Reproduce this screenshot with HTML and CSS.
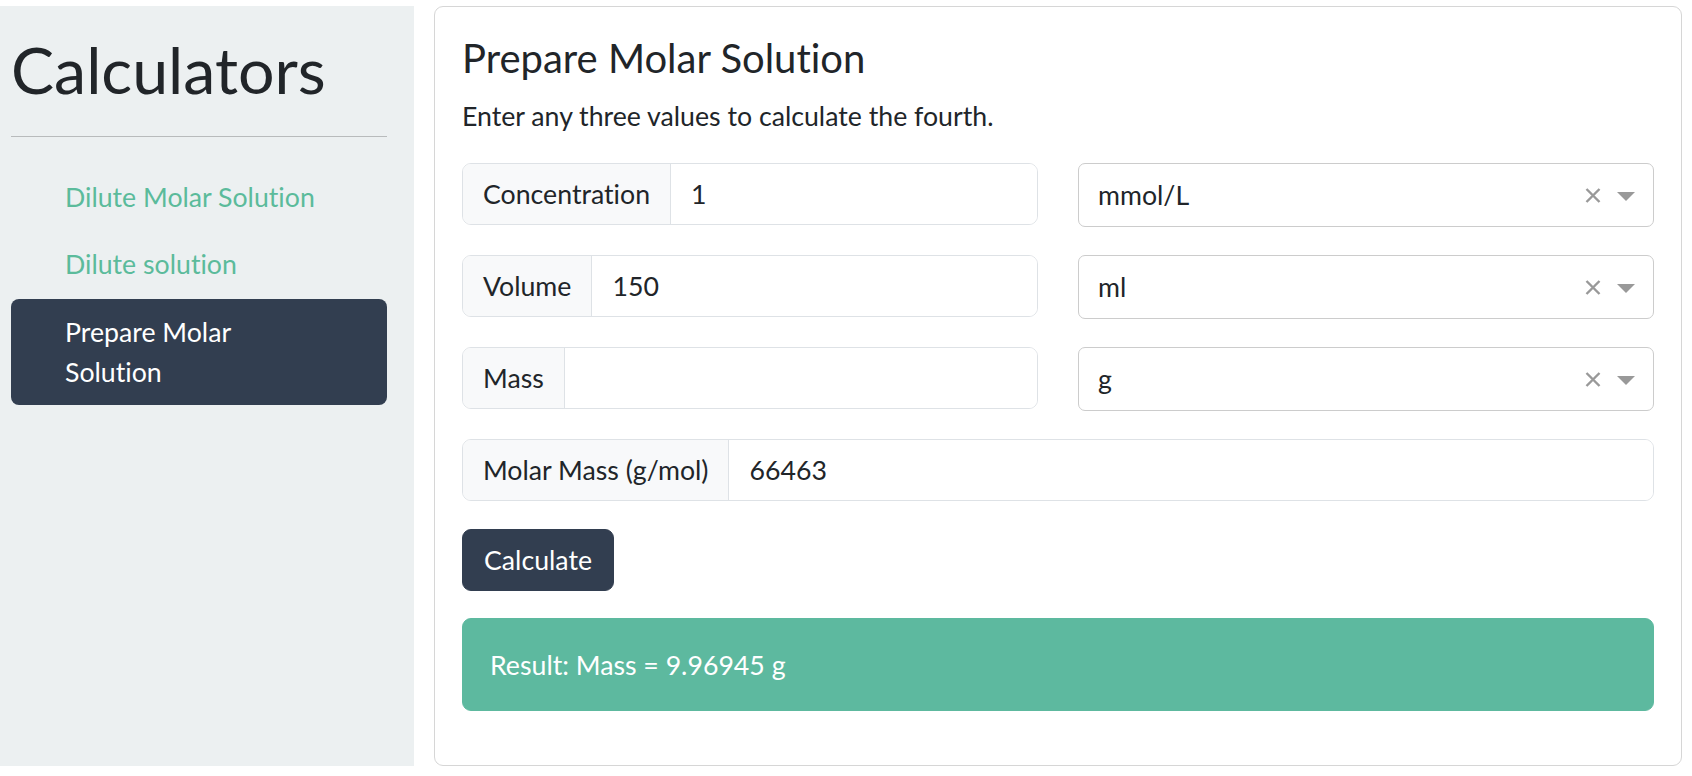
FILE: index.html
```html
<!DOCTYPE html>
<html lang="en">
<head>
<meta charset="utf-8">
<title>Calculators</title>
<link rel="stylesheet" href="styles.css">
</head>
<body>
<div class="page">
  <aside class="sidebar">
    <h1 class="brand">Calculators</h1>
    <hr class="divider">
    <nav class="nav">
      <a class="nav-link" href="#">Dilute Molar Solution</a>
      <a class="nav-link" href="#">Dilute solution</a>
      <a class="nav-link active" href="#">Prepare Molar Solution</a>
    </nav>
  </aside>
  <main class="card">
    <h2 class="card-title">Prepare Molar Solution</h2>
    <p class="card-text">Enter any three values to calculate the fourth.</p>
    <div class="form-grid">
      <div class="input-group"><span class="addon">Concentration</span><input class="field" type="text" value="1"></div>
      <div class="select">
        <span class="select-value">mmol/L</span>
        <svg class="clear-icon" width="16" height="15" viewBox="0 0 16 15"><path d="M1.5 1L14.5 14M14.5 1L1.5 14" stroke="#999" stroke-width="2.4" fill="none"/></svg>
        <svg class="arrow-icon" width="18" height="9" viewBox="0 0 18 9"><path d="M0 0H18L9 9Z" fill="#999"/></svg>
      </div>
      <div class="input-group"><span class="addon">Volume</span><input class="field" type="text" value="150"></div>
      <div class="select">
        <span class="select-value">ml</span>
        <svg class="clear-icon" width="16" height="15" viewBox="0 0 16 15"><path d="M1.5 1L14.5 14M14.5 1L1.5 14" stroke="#999" stroke-width="2.4" fill="none"/></svg>
        <svg class="arrow-icon" width="18" height="9" viewBox="0 0 18 9"><path d="M0 0H18L9 9Z" fill="#999"/></svg>
      </div>
      <div class="input-group"><span class="addon">Mass</span><input class="field" type="text" value=""></div>
      <div class="select">
        <span class="select-value">g</span>
        <svg class="clear-icon" width="16" height="15" viewBox="0 0 16 15"><path d="M1.5 1L14.5 14M14.5 1L1.5 14" stroke="#999" stroke-width="2.4" fill="none"/></svg>
        <svg class="arrow-icon" width="18" height="9" viewBox="0 0 18 9"><path d="M0 0H18L9 9Z" fill="#999"/></svg>
      </div>
      <div class="input-group wide"><span class="addon">Molar Mass (g/mol)</span><input class="field" type="text" value="66463"></div>
    </div>
    <button class="btn" type="button">Calculate</button>
    <div class="alert">Result: Mass = 9.96945 g</div>
  </main>
</div>
</body>
</html>
```

FILE: styles.css
```css
* { box-sizing: border-box; }

html, body {
  margin: 0;
  padding: 0;
  background: #fff;
}

body {
  font-family: Lato, "Noto Sans", sans-serif;
  color: #212529;
  font-size: 26.7px;
  line-height: 40px;
  font-variant-ligatures: no-common-ligatures;
  font-feature-settings: "liga" 0, "clig" 0;
}

input, button {
  font-variant-ligatures: no-common-ligatures;
  font-feature-settings: "liga" 0, "clig" 0;
}

.page {
  display: flex;
  gap: 20px;
  padding: 6px 10px 0 0;
}

/* Sidebar */
.sidebar {
  width: 414px;
  flex: none;
  background: #ecf0f1;
  padding: 23px 27px 0 11px;
}

.brand {
  margin: 0;
  font-size: 64.5px;
  line-height: 81px;
  font-weight: 400;
  color: #212529;
}

.divider {
  margin: 26px 0 26px;
  border: 0;
  border-top: 1px solid #b8bbbc;
  height: 0;
}

.nav {
  display: flex;
  flex-direction: column;
  gap: 1px;
}

.nav-link {
  display: block;
  padding: 13.5px 60px 13.3px 54px;
  font-size: 26.7px;
  line-height: 40px;
  color: #5bbb9b;
  text-decoration: none;
  border-radius: 8px;
}

.nav-link.active {
  background: #323e50;
  color: #fff;
  padding-top: 13px;
}

/* Card */
.card {
  flex: 1;
  border: 1px solid #d6d6d6;
  border-radius: 9px;
  padding: 27px;
  background: #fff;
}

.card-title {
  margin: 0 0 14px;
  font-size: 40px;
  line-height: 48px;
  font-weight: 400;
  color: #212529;
}

.card-text {
  margin: 0 0 27px;
  font-size: 26.7px;
  line-height: 40px;
}

.form-grid {
  display: grid;
  grid-template-columns: 1fr 1fr;
  column-gap: 40px;
  row-gap: 28px;
  align-items: start;
  margin-bottom: 28px;
}

.input-group {
  display: flex;
  height: 62px;
  border: 1px solid #dee2e6;
  border-radius: 9px;
  overflow: hidden;
  background: #fff;
}

.input-group.wide {
  grid-column: 1 / -1;
}

.addon {
  display: flex;
  align-items: center;
  padding: 0 20px;
  background: #f8f9fa;
  border-right: 1px solid #dee2e6;
  white-space: nowrap;
  color: #212529;
}

.field {
  flex: 1;
  min-width: 0;
  border: 0;
  outline: none;
  padding: 0 20px;
  font-family: inherit;
  font-size: 26.7px;
  line-height: 40px;
  color: #212529;
  background: #fff;
}

.select {
  display: flex;
  align-items: center;
  height: 64px;
  border: 1px solid #ccc;
  border-radius: 7px;
  padding: 0 18px 0 19px;
  background: #fff;
}

.select-value {
  flex: 1;
  color: #212529;
}

.clear-icon {
  margin-right: 16px;
  flex: none;
}

.arrow-icon {
  flex: none;
  margin-top: 2px;
}

.btn {
  display: block;
  font-family: inherit;
  font-size: 26.7px;
  line-height: 40px;
  padding: 10px 21px;
  border: 1px solid #323e50;
  background: #323e50;
  color: #fff;
  border-radius: 9px;
  margin: 0 0 27px;
  cursor: pointer;
}

.alert {
  background: #5db99f;
  border: 1px solid #5db99f;
  color: #fff;
  border-radius: 9px;
  padding: 25.5px 27px;
  margin-bottom: 27px;
}
```
